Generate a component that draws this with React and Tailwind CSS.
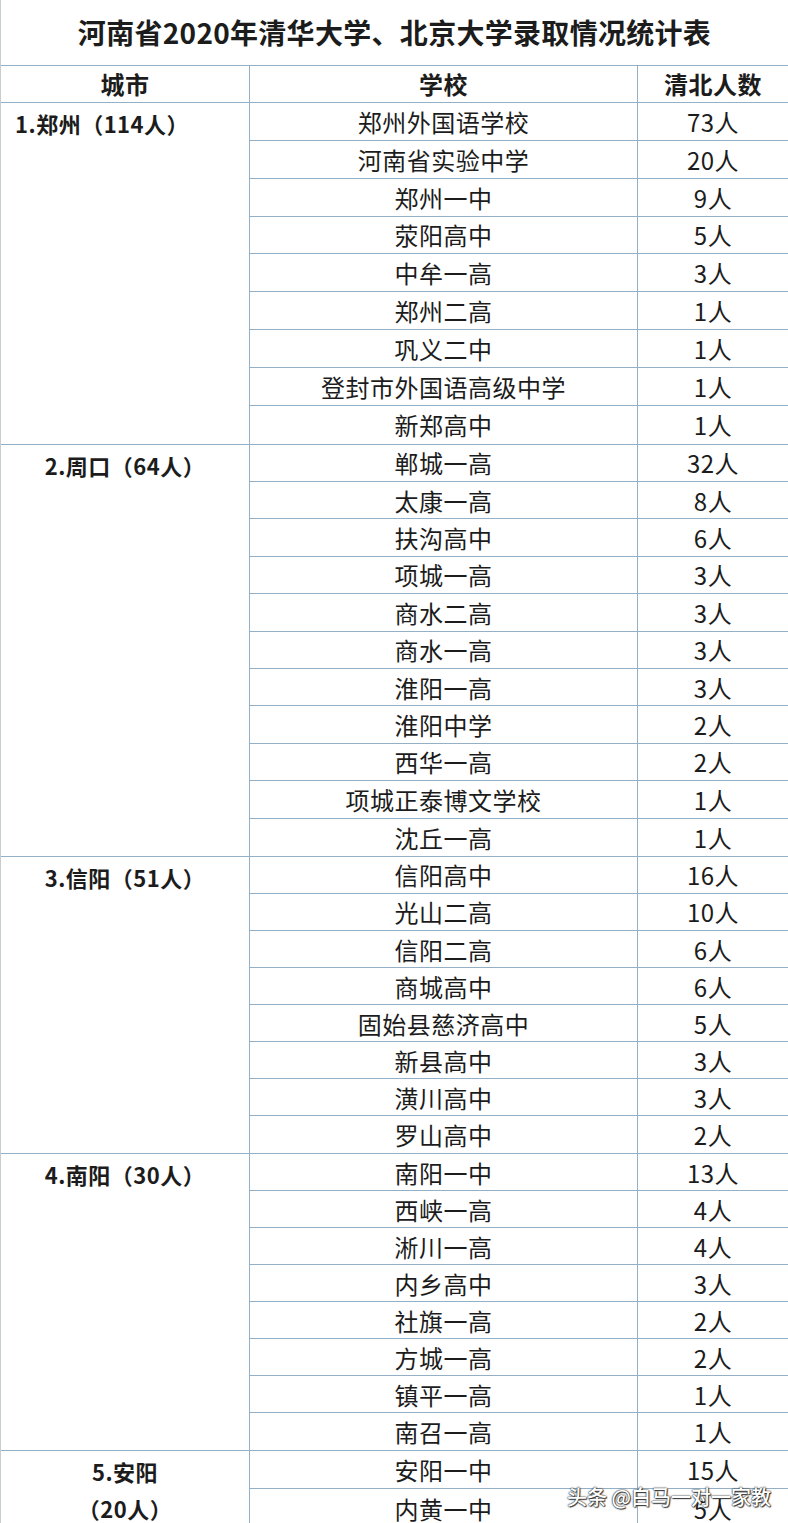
import React from "react";

const groups = [
  {
    city: "1.郑州（114人）",
    align: "left",
    h: "h-[37.85px]",
    rows: [
      ["郑州外国语学校", "73人"],
      ["河南省实验中学", "20人"],
      ["郑州一中", "9人"],
      ["荥阳高中", "5人"],
      ["中牟一高", "3人"],
      ["郑州二高", "1人"],
      ["巩义二中", "1人"],
      ["登封市外国语高级中学", "1人"],
      ["新郑高中", "1人"],
    ],
  },
  {
    city: "2.周口（64人）",
    h: "h-[37.4px]",
    rows: [
      ["郸城一高", "32人"],
      ["太康一高", "8人"],
      ["扶沟高中", "6人"],
      ["项城一高", "3人"],
      ["商水二高", "3人"],
      ["商水一高", "3人"],
      ["淮阳一高", "3人"],
      ["淮阳中学", "2人"],
      ["西华一高", "2人"],
      ["项城正泰博文学校", "1人"],
      ["沈丘一高", "1人"],
    ],
  },
  {
    city: "3.信阳（51人）",
    h: "h-[37.05px]",
    rows: [
      ["信阳高中", "16人"],
      ["光山二高", "10人"],
      ["信阳二高", "6人"],
      ["商城高中", "6人"],
      ["固始县慈济高中", "5人"],
      ["新县高中", "3人"],
      ["潢川高中", "3人"],
      ["罗山高中", "2人"],
    ],
  },
  {
    city: "4.南阳（30人）",
    h: "h-[37px]",
    rows: [
      ["南阳一中", "13人"],
      ["西峡一高", "4人"],
      ["淅川一高", "4人"],
      ["内乡高中", "3人"],
      ["社旗一高", "2人"],
      ["方城一高", "2人"],
      ["镇平一高", "1人"],
      ["南召一高", "1人"],
    ],
  },
  {
    city: ["5.安阳", "（20人）"],
    h: "h-[38px]",
    rows: [
      ["安阳一中", "15人"],
      ["内黄一中", "5人"],
    ],
  },
];

const Group = ({ group }) => {
  const lines = Array.isArray(group.city) ? group.city : [group.city];
  return (
    <div className="flex border-b border-[#94b0c6]">
      <div
        className={`w-[249px] shrink-0 border-r border-[#94b0c6] text-[22px] font-bold leading-[37px] pt-[2px] ${
          group.align === "left" ? "text-left pl-[14px]" : "text-center"
        }`}
      >
        {lines.map((l) => (
          <div key={l}>{l}</div>
        ))}
      </div>
      <div className="flex-1">
        {group.rows.map(([school, count], i) => (
          <div
            key={school}
            className={`flex ${group.h} ${
              i < group.rows.length - 1 ? "border-b border-[#94b0c6]" : ""
            }`}
          >
            <div className="w-[388px] shrink-0 border-r border-[#94b0c6] flex items-center justify-center pt-[1px]">
              {school}
            </div>
            <div className="flex-1 flex items-center justify-center pt-[1px]">
              {count}
            </div>
          </div>
        ))}
      </div>
    </div>
  );
};

export default function App() {
  return (
    <div className="relative w-[788px] h-[1523px] overflow-hidden bg-white text-[#1c1c1c] font-['Noto_Sans_CJK_SC','Noto_Sans',sans-serif]">
      <div className="border-l border-[#c8cdd2] min-h-full">
        <div className="h-[65px] flex items-center justify-center text-[28px] font-bold tracking-[0.3px] pb-[1px]">
          河南省2020年清华大学、北京大学录取情况统计表
        </div>
        <div className="border-t border-[#94b0c6] text-[24px] tracking-[0.5px]">
          <div className="flex h-[37px] border-b border-[#94b0c6] font-bold">
            <div className="w-[249px] shrink-0 border-r border-[#94b0c6] flex items-center justify-center">
              城市
            </div>
            <div className="w-[388px] shrink-0 border-r border-[#94b0c6] flex items-center justify-center">
              学校
            </div>
            <div className="flex-1 flex items-center justify-center">清北人数</div>
          </div>
          {groups.map((g, i) => (
            <Group key={i} group={g} />
          ))}
        </div>
      </div>
      <div className="absolute left-[567px] top-[1482px] text-[20px] font-medium text-white [text-shadow:0_0_2px_#222,0_0_1px_#222,1px_1px_1px_#444]">
        头条 @白马一对一家教
      </div>
    </div>
  );
}
